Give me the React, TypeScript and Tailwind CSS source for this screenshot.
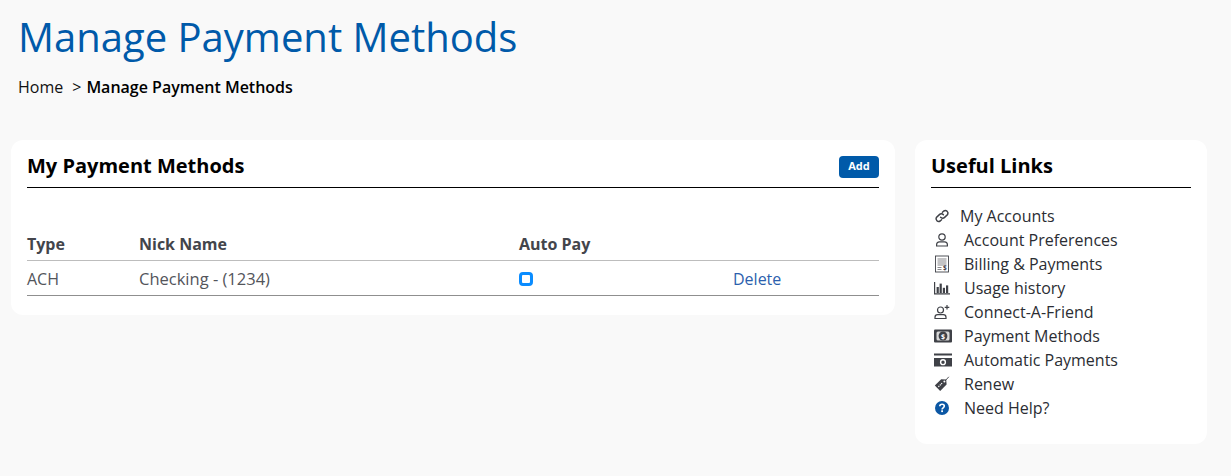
const LINKS = [
  { label: "My Accounts", icon: <LinkIcon />, gap: "w-[29px]" },
  { label: "Account Preferences", icon: <UserIcon />, gap: "w-[33px]" },
  { label: "Billing & Payments", icon: <BillIcon />, gap: "w-[33px]" },
  { label: "Usage history", icon: <ChartIcon />, gap: "w-[33px]" },
  { label: "Connect-A-Friend", icon: <UserPlusIcon />, gap: "w-[33px]" },
  { label: "Payment Methods", icon: <CashIcon />, gap: "w-[33px]" },
  { label: "Automatic Payments", icon: <AutoIcon />, gap: "w-[33px]" },
  { label: "Renew", icon: <TagIcon />, gap: "w-[33px]" },
  { label: "Need Help?", icon: <HelpIcon />, gap: "w-[33px]" },
];

function LinkIcon() {
  return (
    <svg width="16" height="16" viewBox="0 0 16 16" fill="none" stroke="#3f4147" strokeWidth="1.5" strokeLinecap="round">
      <path d="M6.6 9.2a2.8 2.8 0 0 0 4 .2l3-2.8a2.7 2.7 0 0 0-3.8-3.6L8.4 4.2" />
      <path d="M9.4 6.8a2.8 2.8 0 0 0-4-.2l-3 2.8a2.7 2.7 0 0 0 3.8 3.6l1.4-1.2" />
    </svg>
  );
}

function UserIcon() {
  return (
    <svg width="16" height="16" viewBox="0 0 16 16" fill="none" stroke="#3f4147" strokeWidth="1.2">
      <circle cx="8" cy="5" r="3.2" />
      <path d="M2.6 14v-1.2c0-1.8 1.3-2.9 2.9-2.9h5c1.6 0 2.9 1.1 2.9 2.9V14z" />
    </svg>
  );
}

function BillIcon() {
  return (
    <svg width="16" height="18" viewBox="0 0 16 18" fill="none" stroke="#3f4147" strokeWidth="0.9">
      <rect x="1.5" y="1" width="13" height="16" />
      <path d="M3.5 4h9M3.5 6h9M3.5 8h9M3.5 10h9M3.5 12.5h4M3.5 14.5h4" strokeOpacity="0.7" />
      <text x="9" y="15.2" fontSize="6.5" fontWeight="700" fill="#3f4147" stroke="none" fontFamily="'Open Sans', sans-serif">$</text>
    </svg>
  );
}

function ChartIcon() {
  return (
    <svg width="16" height="14" viewBox="0 0 16 14" fill="#3f4147">
      <path d="M0 1h1.2v12H0zM0 12.2h16v1.2H0z" />
      <rect x="2.6" y="6" width="2.2" height="6" />
      <rect x="5.6" y="2.6" width="2.2" height="9.4" />
      <rect x="8.8" y="6.8" width="2.2" height="5.2" />
      <rect x="12" y="4.4" width="2.2" height="7.6" />
    </svg>
  );
}

function UserPlusIcon() {
  return (
    <svg width="16" height="16" viewBox="0 0 16 16" fill="none" stroke="#3f4147" strokeWidth="1.2">
      <circle cx="6.5" cy="6" r="3" />
      <path d="M1 14.5v-1.2c0-1.6 1.2-2.7 2.7-2.7h5.6c1.5 0 2.7 1.1 2.7 2.7v1.2z" />
      <path d="M13 1v4.6M10.7 3.3h4.6" />
    </svg>
  );
}

function CashIcon() {
  return (
    <svg width="18" height="14" viewBox="0 0 18 14">
      <rect x="0" y="0.5" width="18" height="13" rx="1" fill="#3f4147" />
      <rect x="2.5" y="2.5" width="13" height="9" rx="1.5" fill="#d9d9d9" />
      <ellipse cx="9" cy="7" rx="4.4" ry="4.5" fill="#3f4147" />
      <text x="9" y="9.6" textAnchor="middle" fontSize="7" fontWeight="700" fill="#fff" fontFamily="'Open Sans', sans-serif">$</text>
    </svg>
  );
}

function AutoIcon() {
  return (
    <svg width="18" height="14" viewBox="0 0 18 14">
      <rect x="0" y="0.5" width="18" height="2" fill="#3f4147" />
      <rect x="0" y="5" width="18" height="8.5" fill="#3f4147" />
      <circle cx="9" cy="9.2" r="2.4" fill="none" stroke="#fff" strokeWidth="1.4" />
    </svg>
  );
}

function TagIcon() {
  return (
    <svg width="16" height="16" viewBox="0 0 16 16">
      <path d="M0.8 9.6 7.2 3.2 12.2 3.6 12.6 8.6 6.2 15z" fill="#3f4147" />
      <circle cx="10.4" cy="5.4" r="1" fill="#fff" />
      <path d="M11 5 14.8 0.8" stroke="#3f4147" strokeWidth="0.9" fill="none" />
      <path d="M4.4 10.8 8.6 6.6" stroke="#fff" strokeWidth="1.2" strokeDasharray="1.2 0.8" />
    </svg>
  );
}

function HelpIcon() {
  return (
    <svg width="16" height="16" viewBox="0 0 16 16">
      <circle cx="8" cy="8" r="7" fill="#0b57a4" />
      <path d="M5.8 6.2c0-1.3 1-2 2.3-2s2.2.8 2.2 1.9c0 1.8-2.2 1.6-2.2 3.3" fill="none" stroke="#fff" strokeWidth="1.6" />
      <rect x="7.2" y="10.3" width="1.8" height="1.8" fill="#fff" />
    </svg>
  );
}

export default function App() {
  return (
    <div className="h-[476px] overflow-hidden bg-[#f9f9f9] font-['Open_Sans',sans-serif] text-[#111]">
      <div className="px-[18px] pt-[10px]">
        <h1 className="text-[40px] leading-[54px] text-[#005aa9]">Manage Payment Methods</h1>
        <div className="mt-[11px] flex text-base leading-[24px]">
          <span>Home</span>
          <span className="ml-[9px]">&gt;</span>
          <span className="ml-[5px] font-semibold text-black">Manage Payment Methods</span>
        </div>
      </div>

      <div className="mt-[41px] flex items-start gap-5 pl-[11px]">
        <div className="h-[175px] w-[884px] rounded-xl bg-white px-4 pt-[10px]">
          <div className="flex h-[38px] items-center justify-between border-b border-black pb-[4px]">
            <h2 className="mb-[2px] text-[20px] font-bold text-black">My Payment Methods</h2>
            <button className="flex h-[22px] w-10 items-center justify-center rounded-[4px] bg-[#005aa9] text-[11px] font-bold text-white">
              Add
            </button>
          </div>

          <div className="mt-[44px] flex h-[29px] items-start border-b border-[#bdbdbd] text-base font-bold text-[#43454b]">
            <span className="w-[112px]">Type</span>
            <span className="w-[380px]">Nick Name</span>
            <span>Auto Pay</span>
          </div>
          <div className="flex h-[35px] items-center border-b border-[#8f8f8f] pt-[2px] text-base text-[#53555b]">
            <span className="w-[112px]">ACH</span>
            <span className="w-[380px] text-[16.5px]">Checking - (1234)</span>
            <span className="w-[214px]">
              <span className="block size-[14px] rounded-[4px] border-[3px] border-[#0a8cff] bg-white" />
            </span>
            <a className="text-[#2c5fad]">Delete</a>
          </div>
        </div>

        <div className="h-[304px] w-[292px] rounded-xl bg-white px-4 pt-[10px]">
          <div className="flex h-[38px] items-center border-b border-black pb-[4px]">
            <h2 className="mb-[2px] text-[20px] font-bold text-black">Useful Links</h2>
          </div>
          <ul className="mt-[16px] text-base text-[#2b2d33]">
            {LINKS.map((link) => (
              <li key={link.label} className="flex h-6 items-center">
                <span className={`flex items-center pl-[3px] ${link.gap}`}>{link.icon}</span>
                {link.label}
              </li>
            ))}
          </ul>
        </div>
      </div>
    </div>
  );
}
